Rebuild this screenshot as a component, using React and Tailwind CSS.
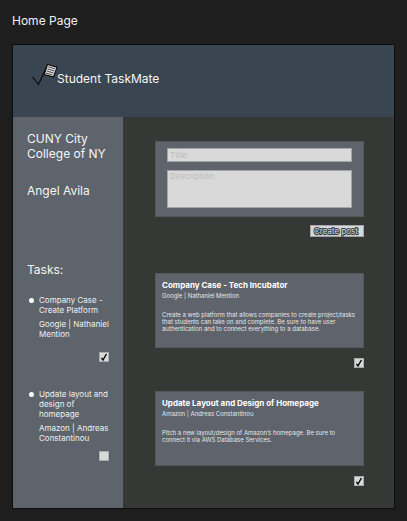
const sidebarTasks = [
  { id: 'case', title: 'Company Case - Create Platform', by: 'Google | Nathaniel Mention', done: true },
  { id: 'layout', title: 'Update layout and design of homepage', by: 'Amazon | Andreas Constantinou', done: false },
];

const posts = [
  {
    id: 'incubator',
    title: 'Company Case - Tech Incubator',
    by: 'Google | Nathaniel Mention',
    text: 'Create a web platform that allows companies to create project/tasks that students can take on and complete. Be sure to have user authentication and to connect everything to a database.',
  },
  {
    id: 'homepage',
    title: 'Update Layout and Design of Homepage',
    by: 'Amazon | Andreas Constantinou',
    text: 'Pitch a new layout/design of Amazon’s homepage. Be sure to connect it via AWS Database Services.',
  },
];

function Logo() {
  return (
    <svg viewBox="0 0 28 24" className="h-6 w-7 shrink-0" fill="none" aria-hidden="true">
      <path d="M1.5 14 7.5 21.5 15.5 4" stroke="#080a0c" strokeWidth="1.1" />
      <path d="M16.5 1.5 26 4.2 22.5 14 13.2 11.5Z" fill="#dedede" stroke="#0a0a0a" strokeWidth="1.1" />
      <path d="M17.3 3.8 24 5.8M16.5 5.9 23.3 7.9M15.8 8 22.6 10M15 10.1 21.5 12" stroke="#222" strokeWidth="0.8" />
    </svg>
  );
}

function Check({ label, checked }) {
  return (
    <span className="grid size-[10px] shrink-0">
      <input
        type="checkbox"
        aria-label={label}
        defaultChecked={checked}
        className="peer col-start-1 row-start-1 size-[10px] appearance-none border border-[#a9abac] bg-[#d9d9d9]"
      />
      <svg
        viewBox="0 0 10 10"
        className="pointer-events-none invisible col-start-1 row-start-1 size-[10px] peer-checked:visible"
        fill="none"
        aria-hidden="true"
      >
        <path d="M2.4 5.8 4 8 7.4 2" stroke="#000" strokeWidth="1.4" />
      </svg>
    </span>
  );
}

function SidebarTask({ task }) {
  return (
    <li className="flex flex-col">
      <div className="flex gap-[5px]">
        <span className="mt-[3px] size-[5px] shrink-0 rounded-full bg-white" />
        <div className="flex flex-col gap-1 text-[8px] leading-[10px] text-[#f0f0f0]">
          <p>{task.title}</p>
          <p>{task.by}</p>
        </div>
      </div>
      <div className={task.done ? 'mt-[13px] flex justify-end' : 'mt-2 flex justify-end'}>
        <Check label={task.title} checked={task.done} />
      </div>
    </li>
  );
}

function Post({ post }) {
  return (
    <article className="flex flex-col items-end gap-[10px]">
      <div className="min-h-[75px] w-full border border-[#54585c] bg-[#5f636c] px-[6px] pt-[6px]">
        <h2 className="text-[8px] leading-[10px] font-bold text-white">{post.title}</h2>
        <p className="mt-[2px] text-[6px] leading-[7px] text-[#e6e6e6]">{post.by}</p>
        <p className="mt-3 text-[6px] leading-[7px] text-[#e6e6e6]">{post.text}</p>
      </div>
      <Check label={post.title} checked />
    </article>
  );
}

export default function App() {
  return (
    <div className="flex min-h-screen flex-col gap-4 bg-[#1e1e1e] px-3 pt-[13px] pb-3 font-['Inter','Liberation_Sans',sans-serif]">
      <h1 className="text-[12px] leading-[15px] text-[#f0f0f0]">Home Page</h1>
      <div className="flex grow flex-col border border-[#0c0d0e]">
        <header className="flex h-[72px] items-start bg-[#394550] pt-[18px] pl-[18px]">
          <Logo />
          <p className="-ml-[2px] pt-2 text-[12px] leading-[15px] text-[#f5f5f5]">Student TaskMate</p>
        </header>
        <div className="flex grow">
          <aside className="w-[110px] shrink-0 bg-[#5e646b] pt-[14px] pr-[14px] pl-[14px] text-[12px] leading-[15px] text-[#f5f5f5]">
            <p>CUNY City College of NY</p>
            <p className="mt-[22px]">Angel Avila</p>
            <h2 className="mt-16">Tasks:</h2>
            <ul className="mt-[18px] flex flex-col gap-[27px] pl-[2px]">
              {sidebarTasks.map((task) => (
                <SidebarTask key={task.id} task={task} />
              ))}
            </ul>
          </aside>
          <main className="flex grow flex-col bg-[#363835] pt-6 pr-[30px] pl-8">
            <form className="flex flex-col items-end gap-2">
              <div className="flex w-full flex-col gap-2 border border-[#54585c] bg-[#5f636c] px-[11px] pt-[6px] pb-2">
                <input
                  aria-label="Title"
                  placeholder="Title:"
                  className="h-[14px] w-full border border-[#a3a5a8] bg-[#d9d9d9] px-[2px] text-[8px] leading-[10px] placeholder:text-[#bcbcbc]"
                />
                <textarea
                  aria-label="Description"
                  placeholder="Description:"
                  className="block h-[38px] w-full resize-none border border-[#a3a5a8] bg-[#d9d9d9] px-[2px] text-[8px] leading-[10px] placeholder:text-[#bcbcbc]"
                />
              </div>
              <button
                type="button"
                className="h-3 w-[54px] border border-[#a3a5a8] bg-[#d9d9d9] pr-[2px] text-center text-[8px] leading-[10px] text-[#d9d9d9] [-webkit-text-stroke:2px_#394550] [paint-order:stroke_fill] [text-shadow:0_2px_2px_rgba(0,0,0,0.25)]"
              >
                Create post
              </button>
            </form>
            <div className="mt-9 flex flex-col gap-[23px]">
              {posts.map((post) => (
                <Post key={post.id} post={post} />
              ))}
            </div>
          </main>
        </div>
      </div>
    </div>
  );
}
